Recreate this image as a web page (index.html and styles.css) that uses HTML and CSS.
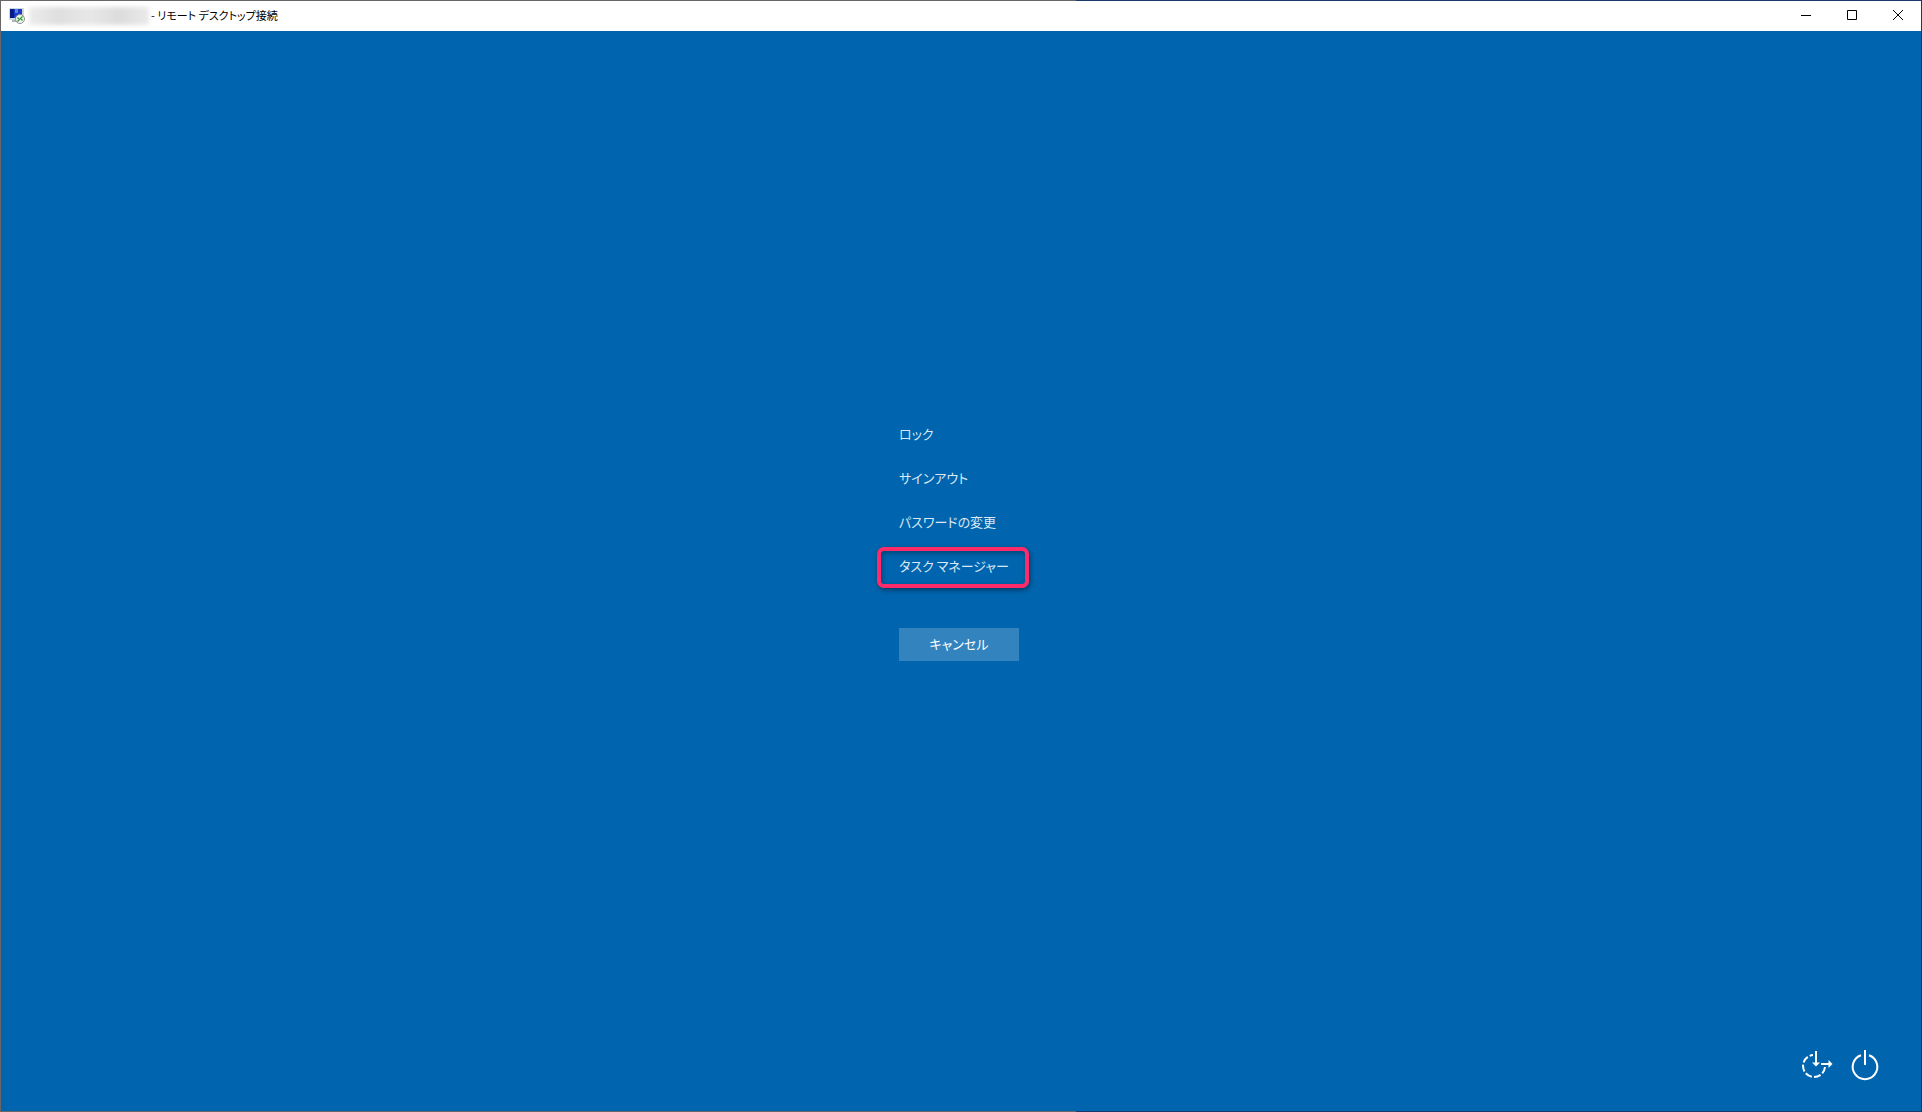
FILE: index.html
```html
<!DOCTYPE html>
<html lang="ja">
<head>
<meta charset="utf-8">
<title>リモート デスクトップ接続</title>
<link rel="stylesheet" href="styles.css">
</head>
<body>
<div class="window">
  <header class="titlebar">
    <svg class="app-icon" viewBox="0 0 16 16" aria-hidden="true">
      <path d="M3 12h7v2H3z" fill="#aab4bc"/>
      <rect x="0" y="0" width="15" height="12" rx="1" fill="#d0d7de"/>
      <rect x="1" y="1" width="12" height="9" fill="#1a3bc4"/>
      <path d="M1 1h4v9H1z" fill="#0a1a85"/>
      <path d="M6 1h3v4H6z" fill="#5c7ee6"/>
      <circle cx="11" cy="11" r="4.500" fill="#f2f5ef" stroke="#8b9096"/>
      <path d="M8.500 9.500l2 2-2 2M13.500 8.500l-2 2 2 2" fill="none" stroke="#259b25" stroke-width="1.200"/>
    </svg>
    <span class="host"></span>
    <span class="title">- リモート デスクトップ接続</span>
    <div class="controls">
      <button class="control" type="button" aria-label="最小化"><svg viewBox="0 0 10 10"><path d="M0 5.500h10"/></svg></button>
      <button class="control" type="button" aria-label="最大化"><svg viewBox="0 0 10 10"><path d="M.5.5h9v9h-9z"/></svg></button>
      <button class="control" type="button" aria-label="閉じる"><svg viewBox="0 0 10 10"><path d="M0 0l10 10M10 0L0 10"/></svg></button>
    </div>
  </header>
  <main class="screen">
    <div class="center">
      <div class="menu">
        <button class="item" type="button">ロック</button>
        <button class="item" type="button">サインアウト</button>
        <button class="item" type="button">パスワードの変更</button>
        <button class="item marked" type="button">タスク マネージャー</button>
        <button class="cancel" type="button">キャンセル</button>
      </div>
    </div>
    <footer class="tools">
      <button class="tool" type="button" aria-label="切断">
        <svg viewBox="0 0 30 30">
          <path stroke-dasharray="7 2.200" d="M23 17a11 11 0 1 1-12-12"/>
          <path d="M14 1v13M19 14h8"/>
          <path class="head" d="M10 12.500h8l-4 4zM26.500 10l4 4-4 4z"/>
        </svg>
      </button>
      <button class="tool" type="button" aria-label="電源">
        <svg viewBox="0 0 30 30"><path d="M13 0v15M9 5.200a12.300 12.300 0 1 0 8 0"/></svg>
      </button>
    </footer>
  </main>
</div>
</body>
</html>
```
FILE: styles.css
```css
*,
*::after {
  box-sizing: border-box;
}

body {
  margin: 0;
  font-family: "Noto Sans CJK JP", sans-serif;
  font-feature-settings: "palt";
}

button {
  margin: 0;
  padding: 0;
  border: 0;
  background: none;
  color: inherit;
  font: inherit;
  font-feature-settings: inherit;
}

svg {
  display: block;
}

.window {
  display: flex;
  flex-direction: column;
  min-height: 100vh;
  padding: 1px;
  background: linear-gradient(90deg, #6b6666 56%, #1b3a6b 56%);
}

.titlebar {
  display: flex;
  align-items: center;
  height: 30px;
  padding-left: 8px;
  background: #fff;
  color: #000;
  font-size: 11px;
  line-height: 16px;
}

.title {
  padding-bottom: 2px;
}

.app-icon {
  width: 16px;
  height: 16px;
}

.host {
  width: 120px;
  height: 18px;
  margin: 0 2px 0 4px;
  background: linear-gradient(90deg, #ececec, #dedede, #e8e8e8, #dcdcdc, #eaeaea);
  filter: blur(2px);
}

.controls {
  display: flex;
  align-self: stretch;
  margin-left: auto;
  padding-bottom: 2px;
}

.control {
  display: grid;
  place-items: center;
  width: 46px;
}

.control svg {
  width: 10px;
  height: 10px;
  fill: none;
  stroke: #000;
  overflow: visible;
}

.screen {
  display: flex;
  flex: 1;
  flex-direction: column;
  background: #0065ae;
  color: #fff;
}

.center {
  display: flex;
  flex: 1;
  align-items: center;
  justify-content: center;
  padding-bottom: 8px;
}

.menu {
  display: flex;
  flex-direction: column;
  align-items: flex-start;
  width: 124px;
  font-size: 13px;
}

.item {
  height: 44px;
  padding-bottom: 2px;
  color: #d9e8f3;
  white-space: nowrap;
}

.marked {
  position: relative;
}

.marked::after {
  content: "";
  position: absolute;
  top: 3px;
  left: -22px;
  width: 152px;
  height: 41px;
  border: 4px solid #ff2a68;
  border-radius: 7px;
  box-shadow: 1px 2px 5px rgba(0, 0, 0, 0.45), inset 1px 2px 5px rgba(0, 0, 0, 0.35);
}

.cancel {
  width: 120px;
  height: 33px;
  margin-top: 40px;
  padding-bottom: 2px;
  background: #3384be;
}

.tools {
  display: flex;
  justify-content: flex-end;
  gap: 20px;
  padding: 0 39px 31px;
}

.tool svg {
  width: 30px;
  height: 30px;
  fill: none;
  stroke: #fff;
  stroke-width: 2;
  overflow: visible;
}

.tool .head {
  fill: #fff;
  stroke: none;
}
```
